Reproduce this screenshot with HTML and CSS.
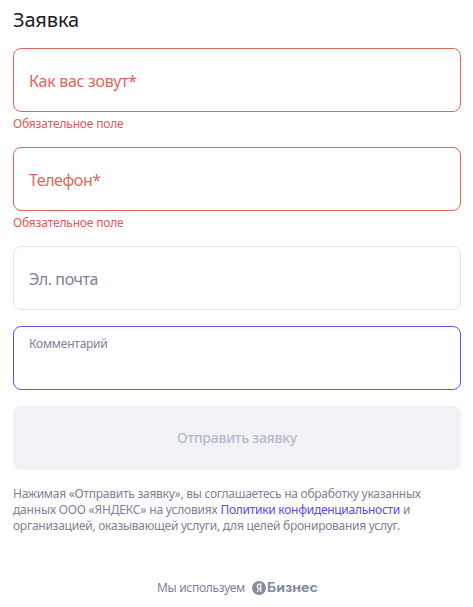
FILE: index.html
```html
<!DOCTYPE html>
<html lang="ru">
<head>
<meta charset="utf-8">
<title>Заявка</title>
<link rel="stylesheet" href="styles.css">
</head>
<body>
<form class="form">
<h1 class="title">Заявка</h1>
<div class="field error"><span class="label-name">Как вас зовут*</span></div>
<p class="hint">Обязательное поле</p>
<div class="field error"><span class="label-phone">Телефон*</span></div>
<p class="hint">Обязательное поле</p>
<div class="field"><span class="label-mail">Эл. почта</span></div>
<div class="field focused"><span class="label-comment">Комментарий</span></div>
<button class="submit" type="button" disabled>Отправить заявку</button>
<p class="legal">Нажимая «Отправить заявку», вы соглашаетесь на обработку указанных<br><span class="terms">данных ООО «ЯНДЕКС» на условиях </span><a class="link">Политики конфиденциальности</a> и<br>организацией, оказывающей услуги, для целей бронирования услуг.</p>
</form>
<footer class="footer"><span class="using">Мы используем</span><svg class="logo" viewBox="0 0 14 14"><circle cx="7" cy="7" r="7" fill="#858ba0"/><path d="M8.800 11V3.200H7.600C6.200 3.200 5.300 4 5.300 5.300S6.100 7.400 7.500 7.400H8.800M7.400 7.400L5.200 11" fill="none" stroke="#fff" stroke-width="1.200"/></svg><b class="brand">Бизнес</b></footer>
</body>
</html>
```
FILE: styles.css
```css
* { box-sizing: border-box; }
body { margin: 0; background: #fff; font-family: "Noto Sans", sans-serif; color: #7d8293; }
.form { padding: 8px 12px 0 13px; }
.title { margin: 0 0 16px; height: 24px; font-size: 20px; line-height: 24px; font-weight: 400; letter-spacing: -0.15px; color: #21201f; }
.field { height: 64px; margin-bottom: 16px; padding: 2px 15px 0; border: 1px solid #e2e3ec; border-radius: 8px; display: flex; align-items: center; font-size: 16px; line-height: 20px; }
.error { border-color: #e0665c; color: #e0665c; margin-bottom: 4px; }
.hint { margin: 0 0 15px; font-size: 12px; line-height: 16px; letter-spacing: -0.17px; color: #e05a57; }
.label-name { letter-spacing: -0.3px; }
.label-phone { letter-spacing: -0.45px; }
.label-mail { letter-spacing: -0.42px; }
.label-comment { letter-spacing: -0.25px; }
.focused { border-color: #6c4df5; align-items: flex-start; padding-top: 9px; font-size: 12px; line-height: 16px; }
.submit { display: block; width: 100%; height: 64px; padding: 0; border: 0; border-radius: 8px; background: #f1f2f6; color: #b5b9c9; font: 500 14px/20px "Noto Sans", sans-serif; letter-spacing: -0.25px; }
.legal { margin: 16px 0 0; font-size: 12px; line-height: 16px; letter-spacing: -0.26px; white-space: nowrap; }
.terms { letter-spacing: -0.18px; }
.link { color: #6246f0; letter-spacing: -0.28px; }
.footer { display: flex; align-items: center; margin-top: 43px; padding-left: 157px; height: 22px; }
.using { width: 95px; font-size: 12px; line-height: 20px; letter-spacing: -0.3px; white-space: nowrap; }
.logo { width: 14px; height: 14px; }
.brand { margin-left: 1px; color: #858ba0; font: 700 12.5px/20px Inter, sans-serif; transform: scaleX(1.13); transform-origin: left center; }
```
